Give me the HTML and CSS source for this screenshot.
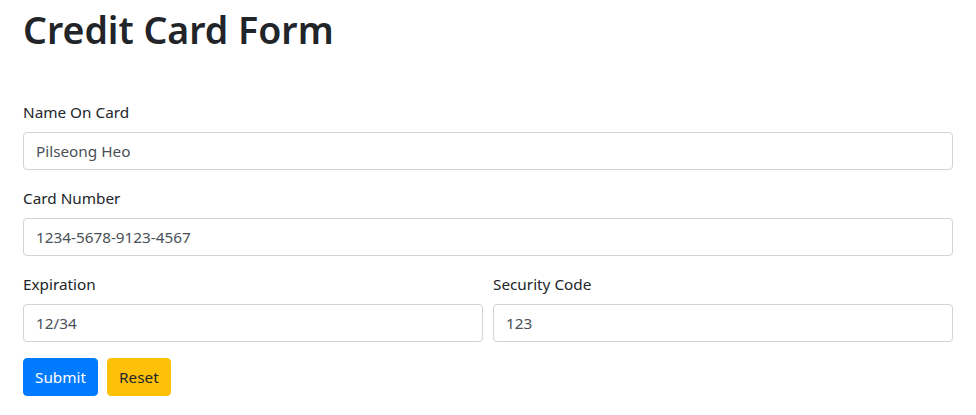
FILE: index.html
```html
<!DOCTYPE html>
<html lang="en">
<head>
<meta charset="utf-8">
<title>Credit Card Form</title>
<link rel="stylesheet" href="styles.css">
</head>
<body>
<div class="container">
  <h1 class="title">Credit Card Form</h1>
  <form class="card-form">
    <div class="form-group">
      <label class="form-label" for="name">Name On Card</label>
      <input class="form-control" id="name" type="text" value="Pilseong Heo">
    </div>
    <div class="form-group">
      <label class="form-label" for="number">Card Number</label>
      <input class="form-control" id="number" type="text" value="1234-5678-9123-4567">
    </div>
    <div class="form-row">
      <div class="form-group">
        <label class="form-label" for="exp">Expiration</label>
        <input class="form-control" id="exp" type="text" value="12/34">
      </div>
      <div class="form-group">
        <label class="form-label" for="cvc">Security Code</label>
        <input class="form-control" id="cvc" type="text" value="123">
      </div>
    </div>
    <div class="actions">
      <button type="submit" class="btn btn-primary">Submit</button>
      <button type="reset" class="btn btn-warning">Reset</button>
    </div>
  </form>
</div>
</body>
</html>
```
FILE: styles.css
```css
* { box-sizing: border-box; }
html, body { margin: 0; padding: 0; background: #fff; }
body {
  font-family: "Noto Sans", "Liberation Sans", sans-serif;
  font-size: 15.3px;
  line-height: 24px;
  color: #212529;
}
.container { padding: 0 23px; }
.title {
  margin: 0;
  padding-top: 6px;
  font-size: 37.5px;
  font-weight: 600;
  line-height: 48px;
  height: 56px;
}
.card-form { margin-top: 44px; }
.form-group { margin-bottom: 16px; }
.form-label { display: block; margin-bottom: 8px; line-height: 24px; }
.form-control {
  display: block;
  width: 100%;
  height: 38px;
  padding: 6px 12px;
  font: inherit;
  line-height: 24px;
  color: #495057;
  background: #fff;
  border: 1px solid #ced4da;
  border-radius: 4px;
  outline: none;
}
.form-row { display: grid; grid-template-columns: 1fr 1fr; column-gap: 10px; }
.actions { display: flex; gap: 9px; }
.btn {
  font: inherit;
  line-height: 24px;
  padding: 6px 11px;
  height: 38px;
  border: 1px solid transparent;
  border-radius: 4px;
  cursor: pointer;
}
.btn-primary { background: #007bff; border-color: #007bff; color: #fff; }
.btn-warning { background: #ffc107; border-color: #ffc107; color: #212529; }
```
